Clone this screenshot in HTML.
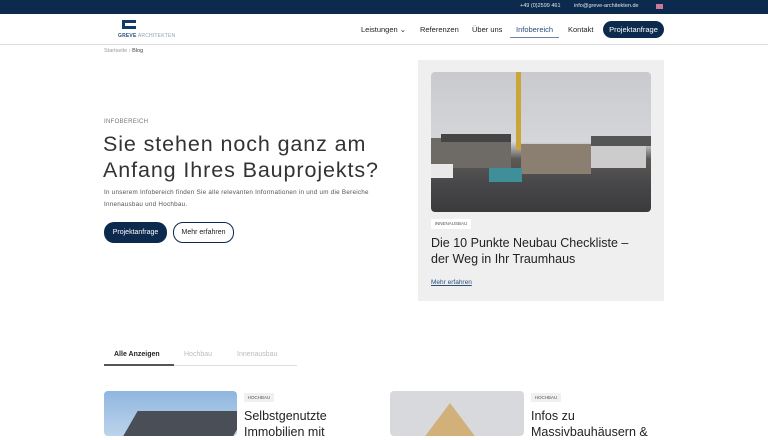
<!DOCTYPE html>
<html><head><meta charset="utf-8"><style>
*{margin:0;padding:0;box-sizing:border-box}
body{width:768px;height:432px;overflow:hidden;background:#fff;font-family:"Liberation Sans",sans-serif;color:#222;position:relative}
.a{position:absolute}
.top{left:0;top:0;width:768px;height:14px;background:#0b2a4d}
.top span{position:absolute;top:3px;font-size:5.5px;color:#dfe6ee}
.hdr{left:0;top:14px;width:768px;height:31px;border-bottom:1px solid #ddd}
.nav{font-size:7.5px;color:#222;top:25px}
.btn{border-radius:10px;font-size:7px;text-align:center}
</style></head><body>
<div class="a top"><span style="left:520px">+49 (0)2599 461</span><span style="left:574px">info@greve-architekten.de</span><span style="left:656px;top:4px;width:7px;height:5px;background:#c97a9a"></span></div>
<div class="a hdr"></div>
<div class="a" style="left:122px;top:20px;width:14px;height:9px;border:3px solid #123a66;border-right:none"></div>
<div class="a" style="left:118px;top:33px;font-size:5px;color:#2a4f7a;letter-spacing:.2px"><b>GREVE</b> <span style="color:#8aa0b8">ARCHITEKTEN</span></div>
<div class="a nav" style="left:361px">Leistungen &#8964;</div>
<div class="a nav" style="left:420px">Referenzen</div>
<div class="a nav" style="left:472px">Über uns</div>
<div class="a nav" style="left:516px;color:#2a4f7a">Infobereich</div>
<div class="a" style="left:510px;top:37px;width:49px;height:1px;background:#6b86a6"></div>
<div class="a nav" style="left:568px">Kontakt</div>
<div class="a btn" style="left:603px;top:21px;width:61px;height:17px;background:#0b2a4d;color:#fff;line-height:17px;font-size:7.5px">Projektanfrage</div>
<div class="a" style="left:104px;top:48px;font-size:5.5px;color:#999">Startseite › <span style="color:#444">Blog</span></div>
<div class="a" style="left:104px;top:119px;font-size:6px;color:#777;letter-spacing:.3px">INFOBEREICH</div>
<div class="a" style="left:103px;top:131px;font-size:21.5px;line-height:26px;color:#333;letter-spacing:.9px">Sie stehen noch ganz am<br>Anfang Ihres Bauprojekts?</div>
<div class="a" style="left:104px;top:187px;font-size:6.3px;line-height:12px;color:#555;letter-spacing:.25px">In unserem Infobereich finden Sie alle relevanten Informationen in und um die Bereiche<br>Innenausbau und Hochbau.</div>
<div class="a btn" style="left:104px;top:222px;width:63px;height:21px;background:#0b2a4d;color:#fff;line-height:21px">Projektanfrage</div>
<div class="a btn" style="left:173px;top:222px;width:61px;height:21px;border:1px solid #0b2a4d;color:#222;line-height:19px">Mehr erfahren</div>
<div class="a" style="left:418px;top:60px;width:246px;height:241px;background:#efefef"></div>
<div class="a" style="left:431px;top:72px;width:220px;height:140px;border-radius:4px;overflow:hidden;background:linear-gradient(#c9cace 0%,#d5d6d9 50%,#5d5a55 62%,#47464a 80%,#3b3a3b 100%)">
<div class="a" style="left:0;top:66px;width:80px;height:30px;background:#6e6a66"></div>
<div class="a" style="left:10px;top:62px;width:70px;height:8px;background:#444"></div>
<div class="a" style="left:160px;top:64px;width:60px;height:10px;background:#555"></div>
<div class="a" style="left:160px;top:74px;width:55px;height:22px;background:#ccc"></div>
<div class="a" style="left:85px;top:0;width:5px;height:78px;background:#c9a53a"></div>
<div class="a" style="left:90px;top:72px;width:70px;height:30px;background:#8a7f70"></div>
<div class="a" style="left:58px;top:96px;width:33px;height:14px;background:#3f8f98"></div>
<div class="a" style="left:0;top:92px;width:22px;height:14px;background:#e8e8e8"></div>
</div>
<div class="a" style="left:431px;top:219px;width:40px;height:10px;background:#fff;font-size:4.5px;line-height:10px;text-align:center;color:#555">INNENAUSBAU</div>
<div class="a" style="left:431px;top:235px;font-size:12.5px;line-height:16px;color:#222">Die 10 Punkte Neubau Checkliste –<br>der Weg in Ihr Traumhaus</div>
<div class="a" style="left:431px;top:279px;font-size:6.5px;color:#2a4f7a;text-decoration:underline">Mehr erfahren</div>
<div class="a" style="left:104px;top:365px;width:193px;height:1px;background:#ddd"></div>
<div class="a" style="left:104px;top:364px;width:70px;height:2px;background:#555"></div>
<div class="a" style="left:114px;top:351px;font-size:7px;font-weight:bold;color:#222">Alle Anzeigen</div>
<div class="a" style="left:184px;top:351px;font-size:7px;color:#bbb">Hochbau</div>
<div class="a" style="left:237px;top:351px;font-size:7px;color:#bbb">Innenausbau</div>
<div class="a" style="left:104px;top:391px;width:133px;height:45px;border-radius:4px;overflow:hidden;background:linear-gradient(#8fb6df,#bcd4ec)"><div class="a" style="left:25px;top:20px;width:110px;height:30px;background:#4a4e57;transform:skewX(-30deg)"></div></div>
<div class="a" style="left:244px;top:393px;width:30px;height:9px;background:#f0f0f0;font-size:4.5px;line-height:9px;text-align:center;color:#555">HOCHBAU</div>
<div class="a" style="left:244px;top:408px;font-size:12.5px;line-height:16px;color:#222">Selbstgenutzte<br>Immobilien mit</div>
<div class="a" style="left:390px;top:391px;width:134px;height:45px;border-radius:4px;overflow:hidden;background:#d8d9dc"><div class="a" style="left:30px;top:12px;width:0;height:0;border-left:30px solid transparent;border-right:30px solid transparent;border-bottom:40px solid #d2b07a"></div></div>
<div class="a" style="left:531px;top:393px;width:30px;height:9px;background:#f0f0f0;font-size:4.5px;line-height:9px;text-align:center;color:#555">HOCHBAU</div>
<div class="a" style="left:531px;top:408px;font-size:12.5px;line-height:16px;color:#222">Infos zu<br>Massivbauhäusern &amp;</div>
</body></html>
